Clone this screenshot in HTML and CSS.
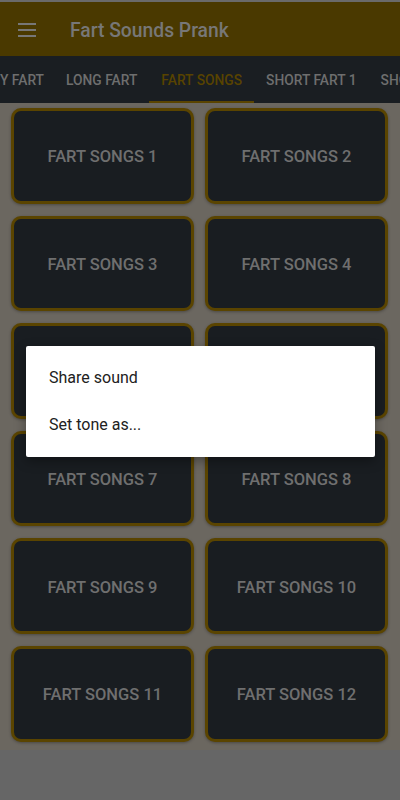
FILE: index.html
```html
<!DOCTYPE html>
<html>
<head>
<meta charset="utf-8">
<link rel="stylesheet" href="styles.css">
</head>
<body>
<div class="app">
  <div class="statusline"></div>
  <header class="appbar">
    <svg class="menu" width="18" height="14" viewBox="0 0 18 14">
      <rect x="0" y="0" width="18" height="2" fill="#777"/>
      <rect x="0" y="6" width="18" height="2" fill="#777"/>
      <rect x="0" y="12" width="18" height="2" fill="#777"/>
    </svg>
    <h1 class="title">Fart Sounds Prank</h1>
  </header>
  <nav class="tabs">
    <div class="tab first">Y FART</div>
    <div class="tab">LONG FART</div>
    <div class="tab active">FART SONGS</div>
    <div class="tab">SHORT FART 1</div>
    <div class="tab">SHORT FART 2</div>
  </nav>
  <main class="grid">
    <div class="card">FART SONGS 1</div>
    <div class="card">FART SONGS 2</div>
    <div class="card">FART SONGS 3</div>
    <div class="card">FART SONGS 4</div>
    <div class="card">FART SONGS 5</div>
    <div class="card">FART SONGS 6</div>
    <div class="card">FART SONGS 7</div>
    <div class="card">FART SONGS 8</div>
    <div class="card">FART SONGS 9</div>
    <div class="card">FART SONGS 10</div>
    <div class="card">FART SONGS 11</div>
    <div class="card">FART SONGS 12</div>
  </main>
  <div class="dialog">
    <div class="item">Share sound</div>
    <div class="item">Set tone as...</div>
  </div>
</div>
</body>
</html>
```
FILE: styles.css
```css
html, body {
  margin: 0;
  padding: 0;
  background: #666666;
  font-family: Roboto, "Liberation Sans", sans-serif;
}
.app {
  position: relative;
  width: 400px;
  height: 800px;
  overflow: hidden;
  background: #666666;
}
.statusline {
  height: 2px;
  background: #6a6a6a;
}
.appbar {
  height: 54px;
  background: #4a3900;
  display: flex;
  align-items: center;
  padding-left: 18px;
}
.menu {
  display: block;
  margin-top: 1px;
}
.title {
  margin: 2px 0 0 34px;
  font-size: 19.3px;
  font-weight: 500;
  color: #777777;
}
.tabs {
  height: 47px;
  background: #1a1e22;
  display: flex;
  overflow: hidden;
  white-space: nowrap;
}
.tab {
  flex: none;
  padding: 3px 12px 0 12px;
  font-size: 13.8px;
  font-weight: 500;
  color: #6e6e6e;
  display: flex;
  align-items: center;
  box-sizing: border-box;
  border-bottom: 2px solid transparent;
}
.tab.first {
  padding-left: 0;
  padding-right: 10px;
}
.tab.active {
  color: #584300;
  border-bottom-color: #5a4400;
}
.grid {
  background: #6b6760;
  display: grid;
  grid-template-columns: 1fr 1fr;
  column-gap: 11px;
  row-gap: 12px;
  padding: 5px 12px 8px 11px;
}
.card {
  height: 95.6px;
  box-sizing: border-box;
  border: 3px solid #5a4400;
  border-radius: 10px;
  background: #191d21;
  display: flex;
  align-items: center;
  justify-content: center;
  padding-top: 2px;
  font-size: 16.5px;
  font-weight: 500;
  color: #6f6f6f;
  box-shadow: 0 1px 3px rgba(0,0,0,0.3);
}
.dialog {
  position: absolute;
  left: 26px;
  top: 346px;
  width: 349px;
  box-sizing: border-box;
  background: #ffffff;
  border-radius: 2px;
  padding: 8px 0 9px 0;
  box-shadow: 0 4px 12px rgba(0,0,0,0.35);
}
.item {
  height: 47px;
  display: flex;
  align-items: center;
  padding-left: 23px;
  font-size: 16px;
  color: #212121;
}
```
